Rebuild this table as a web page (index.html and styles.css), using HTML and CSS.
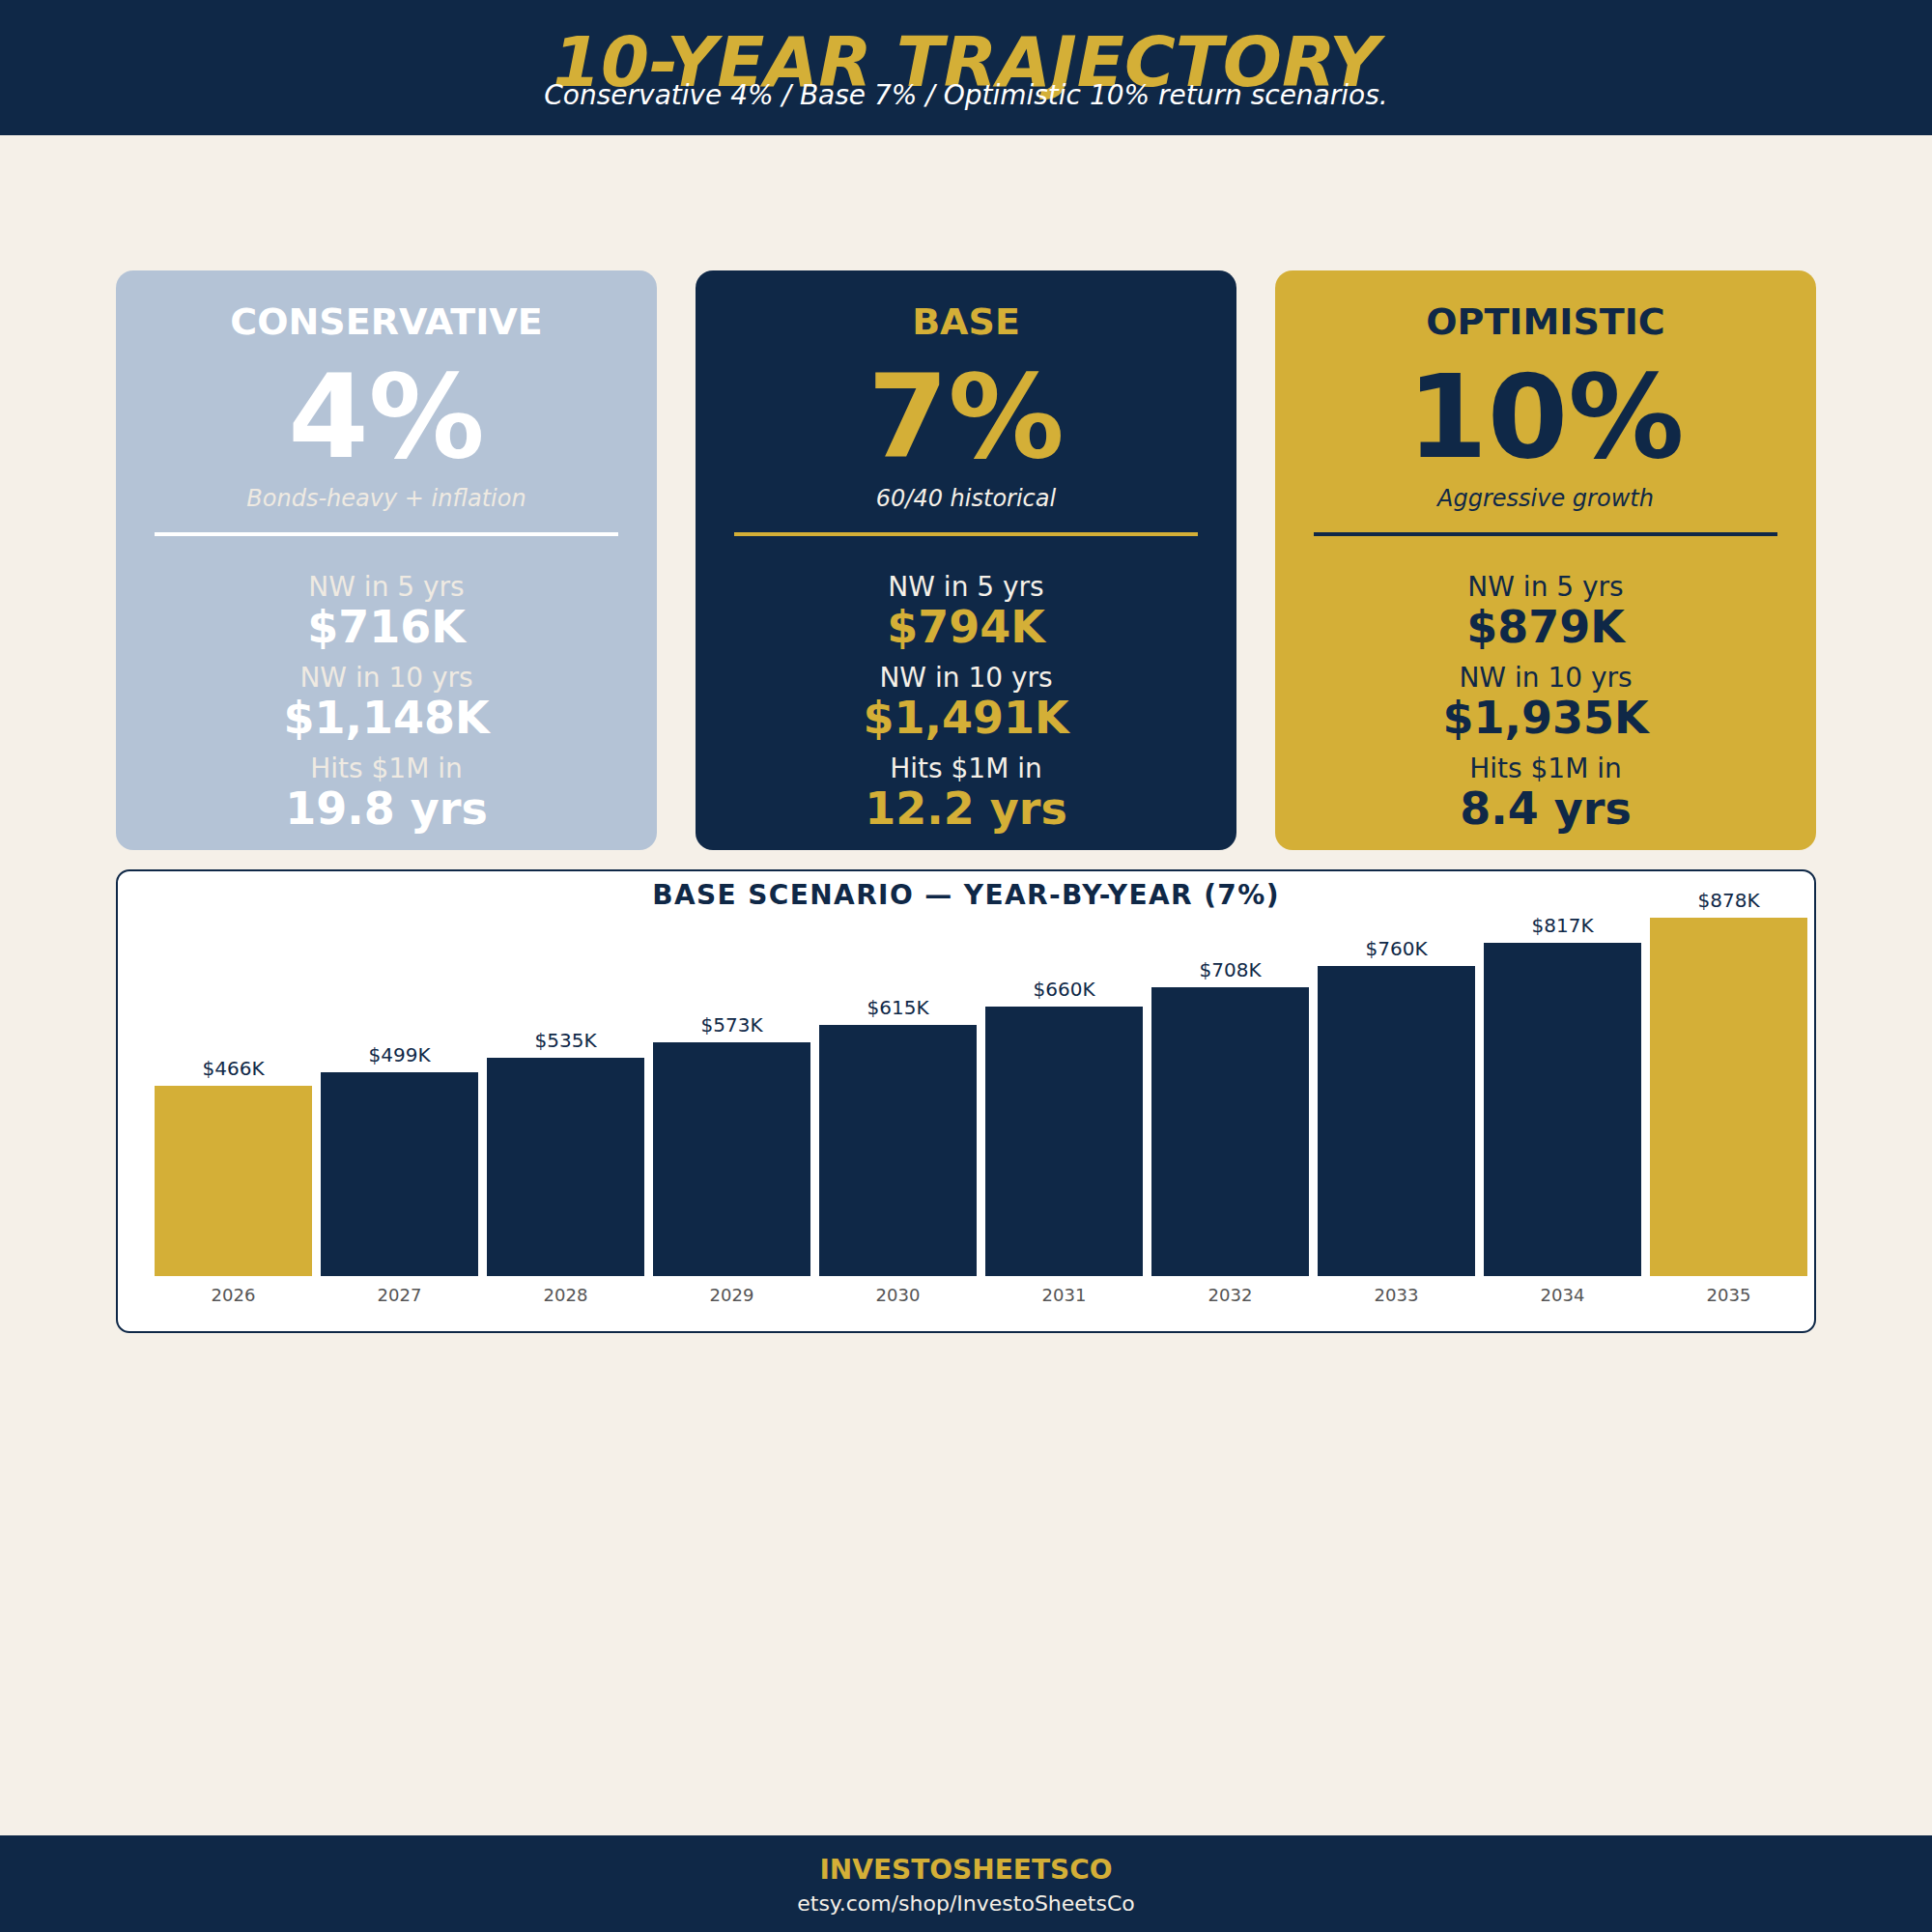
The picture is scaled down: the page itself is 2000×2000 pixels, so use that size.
FILE: index.html
```html
<!DOCTYPE html>
<html lang="en">
<head>
<meta charset="utf-8">
<title>10-Year Trajectory</title>
<link rel="stylesheet" href="styles.css">
</head>
<body>
<div class="page">
  <header class="header">
    <h1 class="title">10-YEAR TRAJECTORY</h1>
    <p class="subtitle">Conservative 4% / Base 7% / Optimistic 10% return scenarios.</p>
  </header>

  <main class="main">
    <section class="cards">
      <div class="card card-cons">
        <div class="card-name">CONSERVATIVE</div>
        <div class="card-rate">4%</div>
        <div class="card-desc">Bonds-heavy + inflation</div>
        <div class="card-rule"></div>
        <div class="stats">
          <div class="stat"><div class="stat-label">NW in 5 yrs</div><div class="stat-value">$716K</div></div>
          <div class="stat"><div class="stat-label">NW in 10 yrs</div><div class="stat-value">$1,148K</div></div>
          <div class="stat"><div class="stat-label">Hits $1M in</div><div class="stat-value">19.8 yrs</div></div>
        </div>
      </div>
      <div class="card card-base">
        <div class="card-name">BASE</div>
        <div class="card-rate">7%</div>
        <div class="card-desc">60/40 historical</div>
        <div class="card-rule"></div>
        <div class="stats">
          <div class="stat"><div class="stat-label">NW in 5 yrs</div><div class="stat-value">$794K</div></div>
          <div class="stat"><div class="stat-label">NW in 10 yrs</div><div class="stat-value">$1,491K</div></div>
          <div class="stat"><div class="stat-label">Hits $1M in</div><div class="stat-value">12.2 yrs</div></div>
        </div>
      </div>
      <div class="card card-opt">
        <div class="card-name">OPTIMISTIC</div>
        <div class="card-rate">10%</div>
        <div class="card-desc">Aggressive growth</div>
        <div class="card-rule"></div>
        <div class="stats">
          <div class="stat"><div class="stat-label">NW in 5 yrs</div><div class="stat-value">$879K</div></div>
          <div class="stat"><div class="stat-label">NW in 10 yrs</div><div class="stat-value">$1,935K</div></div>
          <div class="stat"><div class="stat-label">Hits $1M in</div><div class="stat-value">8.4 yrs</div></div>
        </div>
      </div>
    </section>

    <section class="chart">
      <h2 class="chart-title">BASE SCENARIO — YEAR-BY-YEAR (7%)</h2>
      <div class="bars">
        <div class="col"><div class="val">$466K</div><div class="bar bar-gold" style="height:197px"></div><div class="year">2026</div></div>
        <div class="col"><div class="val">$499K</div><div class="bar" style="height:211px"></div><div class="year">2027</div></div>
        <div class="col"><div class="val">$535K</div><div class="bar" style="height:226px"></div><div class="year">2028</div></div>
        <div class="col"><div class="val">$573K</div><div class="bar" style="height:242px"></div><div class="year">2029</div></div>
        <div class="col"><div class="val">$615K</div><div class="bar" style="height:260px"></div><div class="year">2030</div></div>
        <div class="col"><div class="val">$660K</div><div class="bar" style="height:279px"></div><div class="year">2031</div></div>
        <div class="col"><div class="val">$708K</div><div class="bar" style="height:299px"></div><div class="year">2032</div></div>
        <div class="col"><div class="val">$760K</div><div class="bar" style="height:321px"></div><div class="year">2033</div></div>
        <div class="col"><div class="val">$817K</div><div class="bar" style="height:345px"></div><div class="year">2034</div></div>
        <div class="col"><div class="val">$878K</div><div class="bar bar-gold" style="height:371px"></div><div class="year">2035</div></div>
      </div>
    </section>
  </main>

  <footer class="footer">
    <div class="brand">INVESTOSHEETSCO</div>
    <div class="shop">etsy.com/shop/InvestoSheetsCo</div>
  </footer>
</div>
</body>
</html>
```

FILE: styles.css
```css
* { box-sizing: border-box; }

html, body {
  margin: 0;
  padding: 0;
  background: #f5f0e8;
  font-family: "DejaVu Sans", "Verdana", sans-serif;
}

.page {
  width: 2000px;
  height: 2000px;
  display: flex;
  flex-direction: column;
  background: #f5f0e8;
}

/* Header */
.header {
  height: 140px;
  background: #0f2847;
  padding-top: 28px;
  text-align: center;
}

.title {
  margin: 0;
  font-size: 72px;
  line-height: 72px;
  font-weight: bold;
  font-style: italic;
  color: #d4af37;
}

.subtitle {
  position: relative;
  margin: -15px 0 0;
  font-size: 28px;
  line-height: 28px;
  font-style: italic;
  color: #ffffff;
}

/* Main */
.main {
  flex: 1;
  padding: 140px 120px 0;
}

.cards {
  display: grid;
  grid-template-columns: repeat(3, 1fr);
  gap: 40px;
}

.card {
  border-radius: 18px;
  padding: 34px 40px 20px;
  display: flex;
  flex-direction: column;
  align-items: center;
  text-align: center;
  height: 600px;
}

.card-name {
  font-size: 38px;
  line-height: 38px;
  font-weight: bold;
}

.card-rate {
  margin-top: 20px;
  font-size: 120px;
  line-height: 120px;
  font-weight: bold;
}

.card-desc {
  margin-top: 12px;
  font-size: 24px;
  line-height: 24px;
  font-style: italic;
}

.card-rule {
  margin-top: 23px;
  width: 100%;
  height: 4px;
}

.stats {
  margin-top: 39px;
  display: flex;
  flex-direction: column;
  gap: 16px;
}

.stat-label {
  font-size: 28px;
  line-height: 28px;
}

.stat-value {
  margin-top: 4px;
  font-size: 46px;
  line-height: 46px;
  font-weight: bold;
}

.card-cons { background: #b4c3d6; color: #ffffff; }
.card-cons .card-desc,
.card-cons .stat-label { color: #efeae2; }
.card-cons .card-rule { background: #ffffff; }

.card-base { background: #0f2847; color: #d4af37; }
.card-base .card-desc,
.card-base .stat-label { color: #f5f0e8; }
.card-base .card-rule { background: #d4af37; }

.card-opt { background: #d4af37; color: #0f2847; }
.card-opt .card-rule { background: #0f2847; }

/* Chart */
.chart {
  position: relative;
  margin-top: 20px;
  height: 480px;
  background: #ffffff;
  border: 2px solid #0f2847;
  border-radius: 14px;
  padding: 0 7px 28px 38px;
}

.chart-title {
  position: absolute;
  top: 11px;
  left: 0;
  right: 0;
  margin: 0;
  text-align: center;
  font-size: 28px;
  line-height: 28px;
  font-weight: bold;
  letter-spacing: 1.4px;
  color: #0f2847;
}

.bars {
  height: 100%;
  display: flex;
  gap: 9px;
  align-items: flex-end;
}

.col {
  flex: 1;
  display: flex;
  flex-direction: column;
  align-items: stretch;
  text-align: center;
}

.val {
  font-size: 20px;
  line-height: 20px;
  color: #0f2847;
  margin-bottom: 8px;
}

.bar {
  background: #0f2847;
}

.bar-gold { background: #d4af37; }

.year {
  margin-top: 11px;
  font-size: 18px;
  line-height: 18px;
  color: #555555;
}

/* Footer */
.footer {
  height: 100px;
  background: #0f2847;
  padding-top: 22px;
  text-align: center;
}

.brand {
  font-size: 28px;
  line-height: 28px;
  font-weight: bold;
  color: #d4af37;
}

.shop {
  margin-top: 10px;
  font-size: 22px;
  line-height: 22px;
  color: #f5f0e8;
}
```
